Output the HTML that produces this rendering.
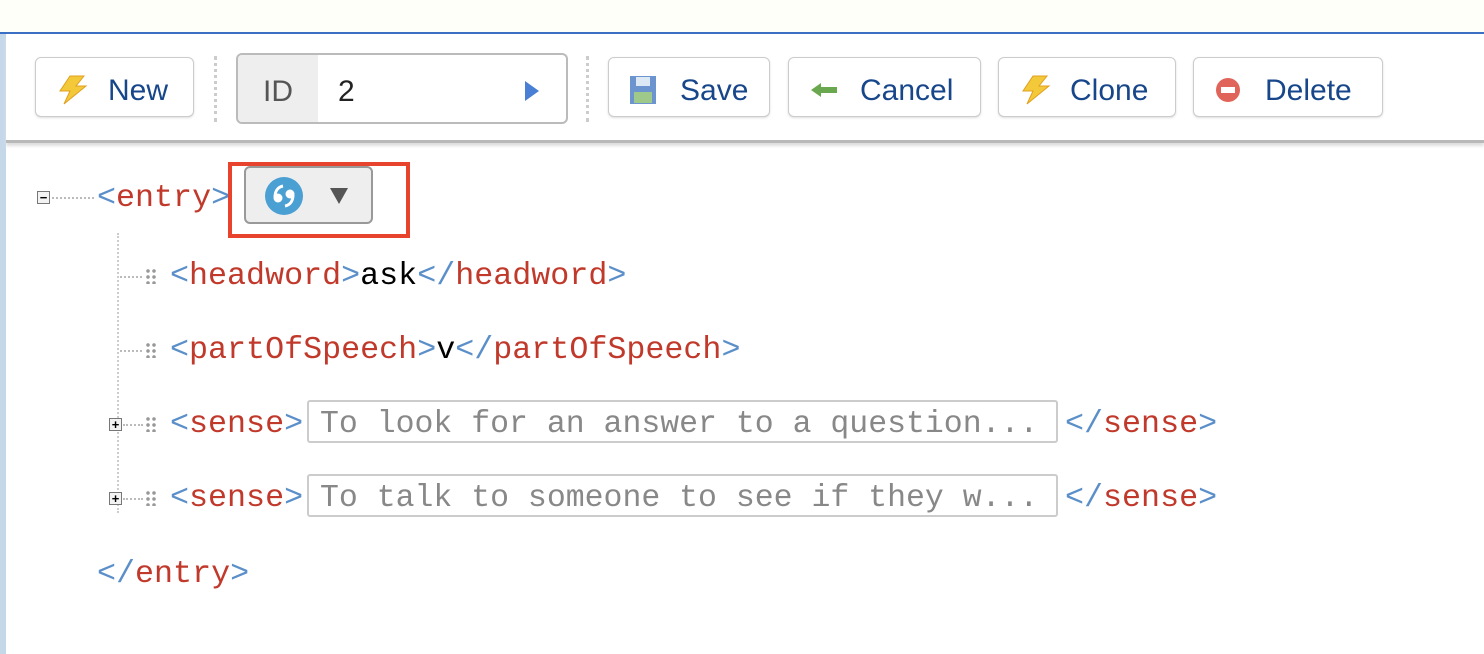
<!DOCTYPE html>
<html><head><style>
body{margin:0;width:1484px;height:654px;background:#fff;position:relative;overflow:hidden;font-family:"Liberation Sans",sans-serif}
.a{position:absolute}
.top{left:0;top:0;width:1484px;height:32px;background:#fffff9;border-bottom:2px solid #3a6fc4}
.strip{left:0;top:34px;width:6px;height:620px;background:#c5d8ea}
.tb{left:6px;top:34px;width:1478px;height:106px;background:#fff;border-bottom:3px solid #b8b8b8;box-shadow:0 3px 3px #ddd}
.btn{position:absolute;top:57px;height:60px;border:1px solid #ccc;border-radius:6px;background:#fff;box-shadow:0 1px 2px #ddd;color:#17468a;font-size:30px;line-height:66px;box-sizing:border-box}
.btn svg{position:absolute;left:20px;top:17px}
.btn span{position:absolute;top:0}
.sep{position:absolute;top:56px;height:66px;border-left:3px dotted #ccc}
.m{font-family:"Liberation Mono",monospace;font-size:31.7px;position:absolute;line-height:40px;white-space:pre}
.b{color:#5b8fc9}.r{color:#c0392b}.k{color:#000}
.inp{position:absolute;left:307px;width:751px;height:43px;border:2px solid #ccc;border-radius:3px;box-sizing:border-box;color:#888;font-family:"Liberation Mono",monospace;font-size:31.5px;line-height:46px;padding-left:11px;white-space:pre}
.dh{position:absolute;border-top:2px dotted #bbb}
.grip{position:absolute;width:12px;height:16px;background:radial-gradient(circle,#999 1.6px,transparent 2px) 0 0/6px 6px}
.pb{position:absolute;width:13px;height:13px;border:1px solid #777;background:#f3f3f3;box-sizing:border-box;font:bold 13px/11px "Liberation Sans";text-align:center;color:#000}
</style></head><body>
<div class="a top"></div><div class="a strip"></div><div class="a tb"></div>
<div class="btn" style="left:35px;width:159px"><svg width="34" height="30" viewBox="0 0 34 30"><path d="M14 1h14l-8 10h10L8 29l6-13H4z" fill="#f3c93a" stroke="#e0a020"/></svg><span style="left:72px">New</span></div>
<div class="sep" style="left:214px"></div>
<div class="a" style="left:236px;top:53px;width:332px;height:71px;border:2px solid #bbb;border-radius:6px;box-sizing:border-box;overflow:hidden"><div style="position:absolute;left:0;top:0;width:80px;height:67px;background:#eee;font-size:30px;line-height:74px;text-align:center;color:#555">ID</div><div style="position:absolute;left:100px;top:0;font-size:30px;line-height:74px;color:#222">2</div><svg style="position:absolute;left:286px;top:25px" width="16" height="22"><path d="M1 1l14 10L1 21z" fill="#4a7fd6"/></svg></div>
<div class="sep" style="left:586px"></div>
<div class="btn" style="left:608px;width:162px"><svg width="28" height="30" viewBox="0 0 28 30"><rect x="1" y="1" width="26" height="28" fill="#6c95d0"/><rect x="7" y="2" width="14" height="9" fill="#dde8f5"/><rect x="5" y="17" width="18" height="11" fill="#9fc98a"/></svg><span style="left:71px">Save</span></div>
<div class="btn" style="left:788px;width:193px"><svg width="30" height="30" viewBox="0 0 30 30"><path d="M2 15l10-7v4h16v6H12v4z" fill="#6aa84f"/></svg><span style="left:71px">Cancel</span></div>
<div class="btn" style="left:998px;width:178px"><svg width="34" height="30" viewBox="0 0 34 30"><path d="M14 1h14l-8 10h10L8 29l6-13H4z" fill="#f3c93a" stroke="#e0a020"/></svg><span style="left:71px">Clone</span></div>
<div class="btn" style="left:1193px;width:190px"><svg width="30" height="30" viewBox="0 0 30 30"><circle cx="14" cy="15" r="12" fill="#e0645a"/><rect x="7" y="12" width="14" height="6" fill="#fff"/></svg><span style="left:71px">Delete</span></div>

<div class="pb" style="left:37px;top:191px">−</div>
<div class="dh" style="left:52px;top:197px;width:42px"></div>
<div class="m" style="left:97px;top:178px"><span class="b">&lt;</span><span class="r">entry</span><span class="b">&gt;</span></div>
<div class="a" style="left:228px;top:162px;width:182px;height:76px;border:4px solid #e8432c;box-sizing:border-box"></div>
<div class="a" style="left:244px;top:166px;width:129px;height:58px;border:2px solid #999;border-radius:6px;background:#eee;box-sizing:border-box"><svg style="position:absolute;left:19px;top:9px" width="38" height="38" viewBox="0 0 38 38"><circle cx="19" cy="19" r="19" fill="#4a9fd3"/><circle cx="13" cy="21" r="4.5" fill="#fff"/><circle cx="25" cy="17" r="4.5" fill="#fff"/><path d="M10 20c0-6 3-10 8-11M28 18c0 6-3 10-8 11" stroke="#fff" stroke-width="3" fill="none"/></svg><svg style="position:absolute;left:84px;top:20px" width="18" height="16"><path d="M0 0h18L9 16z" fill="#555"/></svg></div>
<div class="a" style="left:117px;top:233px;height:280px;border-left:2px dotted #ccc"></div>

<div class="dh" style="left:120px;top:276px;width:22px"></div><div class="grip" style="left:145px;top:268px"></div>
<div class="m" style="left:170px;top:256px"><span class="b">&lt;</span><span class="r">headword</span><span class="b">&gt;</span><span class="k">ask</span><span class="b">&lt;/</span><span class="r">headword</span><span class="b">&gt;</span></div>
<div class="dh" style="left:120px;top:350px;width:22px"></div><div class="grip" style="left:145px;top:342px"></div>
<div class="m" style="left:170px;top:330px"><span class="b">&lt;</span><span class="r">partOfSpeech</span><span class="b">&gt;</span><span class="k">v</span><span class="b">&lt;/</span><span class="r">partOfSpeech</span><span class="b">&gt;</span></div>

<div class="pb" style="left:109px;top:418px">+</div><div class="dh" style="left:123px;top:424px;width:20px"></div><div class="grip" style="left:145px;top:416px"></div>
<div class="m" style="left:170px;top:404px"><span class="b">&lt;</span><span class="r">sense</span><span class="b">&gt;</span></div>
<div class="inp" style="top:400px">To look for an answer to a question...</div>
<div class="m" style="left:1065px;top:404px"><span class="b">&lt;/</span><span class="r">sense</span><span class="b">&gt;</span></div>

<div class="pb" style="left:109px;top:492px">+</div><div class="dh" style="left:123px;top:498px;width:20px"></div><div class="grip" style="left:145px;top:490px"></div>
<div class="m" style="left:170px;top:478px"><span class="b">&lt;</span><span class="r">sense</span><span class="b">&gt;</span></div>
<div class="inp" style="top:474px">To talk to someone to see if they w...</div>
<div class="m" style="left:1065px;top:478px"><span class="b">&lt;/</span><span class="r">sense</span><span class="b">&gt;</span></div>

<div class="m" style="left:97px;top:554px"><span class="b">&lt;/</span><span class="r">entry</span><span class="b">&gt;</span></div>
</body></html>
